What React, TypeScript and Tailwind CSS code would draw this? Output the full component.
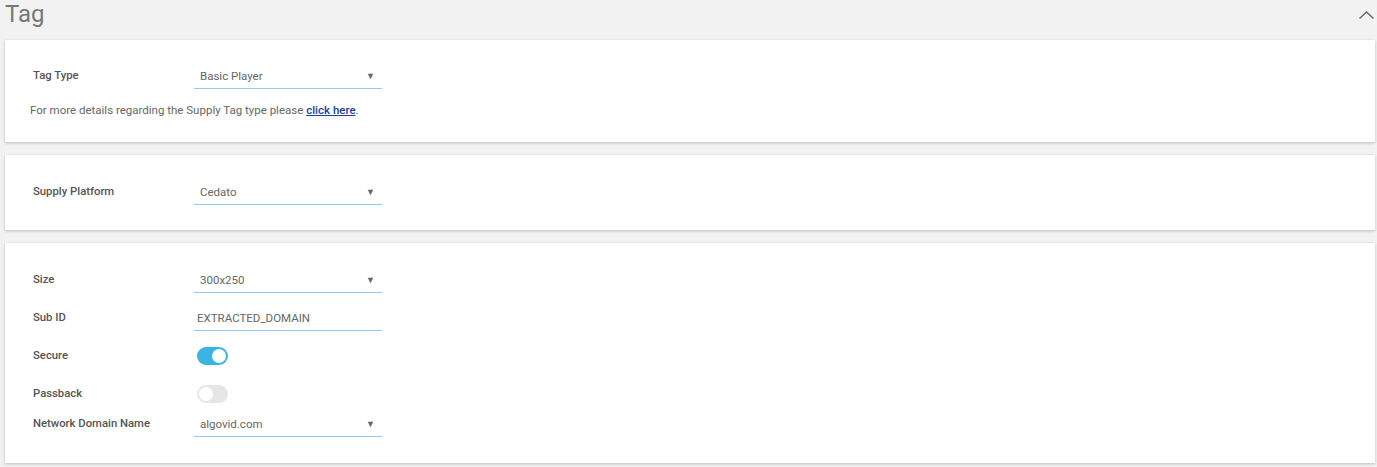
import type { ReactNode } from "react";

function Card({ className, children }: { className: string; children: ReactNode }) {
  return (
    <div className={`ml-[5px] mr-[2px] bg-white shadow-[0_1px_3px_rgba(0,0,0,0.22)] ${className}`}>
      {children}
    </div>
  );
}

function Row({ label, className = "", children }: { label: string; className?: string; children: ReactNode }) {
  return (
    <div className={`flex items-center pl-[28px] ${className}`}>
      <div className="w-[161px] pt-[2px] text-[11.3px] font-medium text-[#555]">{label}</div>
      {children}
    </div>
  );
}

function Select({ value }: { value: string }) {
  return (
    <div className="flex h-[27px] w-[188px] items-center justify-between border-b border-[#90caf9] pl-[6px] pr-[7px] pt-[3px] text-[11.5px] text-[#666]">
      <span>{value}</span>
      <span className="text-[9px] text-[#666]">▼</span>
    </div>
  );
}

function TextInput({ value }: { value: string }) {
  return (
    <div className="flex h-[27px] w-[188px] items-center border-b border-[#90caf9] pl-[3px] pt-[3px] text-[11.5px] text-[#666]">
      {value}
    </div>
  );
}

function Toggle({ on }: { on: boolean }) {
  return (
    <div
      className={
        on
          ? "ml-[3px] flex h-[18px] w-[31px] items-center justify-end rounded-full bg-[#3bb4e5] p-[2px]"
          : "ml-[3px] flex h-[18px] w-[31px] items-center justify-start rounded-full bg-[#e6e6e6] p-[2px]"
      }
    >
      <div className="h-[14px] w-[14px] rounded-full bg-white" />
    </div>
  );
}

export default function App() {
  return (
    <div className="h-[467px] w-[1377px] bg-[#f2f2f2] font-['Roboto',sans-serif]">
      <div className="flex h-[40px] items-start justify-between pl-[5px] pr-[2px]">
        <h1 className="text-[24px] leading-[28px] text-[#777]">Tag</h1>
        <svg className="mt-[9px]" width="17" height="12" viewBox="0 0 17 12" fill="none">
          <path d="M1.5 9.5 L8.5 3 L15.5 9.5" stroke="#6b6b6b" strokeWidth="1.6" />
        </svg>
      </div>

      <Card className="h-[102px] pt-[22px]">
        <Row label="Tag Type">
          <Select value="Basic Player" />
        </Row>
        <p className="mt-[13px] pl-[25px] text-[11.5px] leading-[16px] text-[#666]">
          For more details regarding the Supply Tag type please{" "}
          <a href="#" className="font-medium text-[#1a3fa0] underline">
            click here
          </a>
          .
        </p>
      </Card>

      <Card className="mt-[13px] h-[75px] pt-[23px]">
        <Row label="Supply Platform">
          <Select value="Cedato" />
        </Row>
      </Card>

      <Card className="mt-[13px] h-[220px] pt-[23px]">
        <Row label="Size">
          <Select value="300x250" />
        </Row>
        <Row label="Sub ID" className="mt-[11px]">
          <TextInput value="EXTRACTED_DOMAIN" />
        </Row>
        <Row label="Secure" className="mt-[11px] h-[27px]">
          <Toggle on />
        </Row>
        <Row label="Passback" className="mt-[11px] h-[27px]">
          <Toggle on={false} />
        </Row>
        <Row label="Network Domain Name" className="mt-[3px]">
          <Select value="algovid.com" />
        </Row>
      </Card>
    </div>
  );
}
